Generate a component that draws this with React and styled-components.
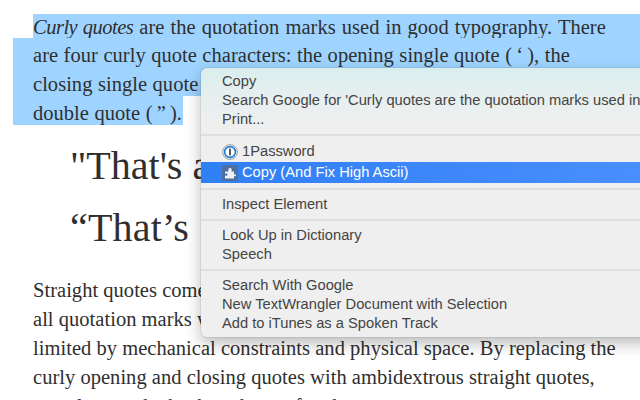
import React from "react";
import styled, { createGlobalStyle } from "styled-components";

const Global = createGlobalStyle`
  html, body { margin: 0; padding: 0; background: #fff; }
  body { width: 640px; height: 400px; overflow: hidden; }
`;

const Page = styled.div`
  position: relative;
  width: 640px;
  height: 400px;
  overflow: hidden;
  padding-top: 14px;
  box-sizing: border-box;
  font-family: "Liberation Serif", serif;
  color: #2f2f2f;
`;

const Selected = styled.div`
  margin-left: 13px;
  display: flex;
  flex-direction: column;
`;

const SelLine = styled.div`
  height: 29px;
  line-height: 35px;
  font-size: 20.5px;
  letter-spacing: 0.03px;
  word-spacing: 0.35px;
  white-space: nowrap;
  padding-left: 20px;
  background: #9ed4ff;
  width: ${(p) => p.$width || "627px"};
  box-sizing: border-box;
`;

const FirstLine = styled(SelLine)`
  height: 24px;
  line-height: 26px;
  margin-left: 20px;
  padding-left: 0;
  width: 607px;
  word-spacing: 0.9px;
`;

const Lead = styled.em`
  letter-spacing: -0.5px;
`;

const Quotes = styled.div`
  margin-top: 19px;
  padding-left: 70px;
  display: flex;
  flex-direction: column;
  gap: 18px;
`;

const Quote = styled.div`
  font-size: 40px;
  line-height: 44px;
  white-space: nowrap;
  letter-spacing: ${(p) => p.$track || "0"};
  word-spacing: ${(p) => p.$word || "0"};
`;

const Body = styled.div`
  margin-top: 26px;
  padding-left: 33px;
`;

const BodyLine = styled.div`
  height: 29px;
  line-height: 29px;
  font-size: 20.5px;
  letter-spacing: 0.03px;
  white-space: nowrap;
`;

const Menu = styled.div`
  position: absolute;
  left: 201px;
  top: 68px;
  width: 460px;
  height: 269px;
  box-sizing: border-box;
  padding-top: 4px;
  border-radius: 6px;
  background: linear-gradient(180deg, #d9eeee 0%, #e6efef 10%, #efefef 22%);
  box-shadow: 0 0 1px rgba(0, 0, 0, 0.5), 0 6px 16px rgba(0, 0, 0, 0.28);
  font-family: "Liberation Sans", sans-serif;
  font-size: 14.7px;
  color: #444;
`;

const Item = styled.div`
  display: flex;
  align-items: center;
  gap: 4px;
  height: 19px;
  line-height: 19px;
  padding-left: 21px;
  white-space: nowrap;
`;

const ActiveItem = styled(Item)`
  height: 21px;
  margin-top: 1px;
  background: linear-gradient(90deg, #2f7ff5, #4a8fff);
  color: #fff;
`;

const Sep = styled.div`
  height: 2px;
  background: #dedede;
  margin: 5px 0 ${(p) => p.$after || "5px"};
`;

const IconBox = styled.span`
  width: 16px;
  height: 16px;
  display: inline-flex;
  flex: none;
`;

const PasswordIcon = () => (
  <svg width="16" height="16" viewBox="0 0 16 16">
    <circle cx="8" cy="8" r="7.4" fill="#f4f4f4" stroke="#8a8a8a" strokeWidth="0.8" />
    <circle cx="8" cy="8" r="5.4" fill="#fff" stroke="#1a7fd8" strokeWidth="1.6" />
    <rect x="7.2" y="4.6" width="1.6" height="6.8" fill="#333" />
  </svg>
);

const PuzzleIcon = () => (
  <svg width="16" height="16" viewBox="0 0 16 16">
    <rect width="16" height="16" fill="#4f6f9f" />
    <path
      d="M3 6.500H6c.5 0 .6-.4.4-.8C6 4.800 6.500 3 8 3s2 1.800 1.600 2.700c-.2.4-.1.8.4.8h2V9c0 .5.4.6.8.4.500-.4 1.200-.2 1.200.8s-.7 1.200-1.200.8c-.4-.2-.8-.1-.8.4v2H3v-2.300c0-.5.4-.6.800-.4.900.4 1.700-.1 1.700-1.100S4.700 8.200 3.800 8.600c-.4.2-.8.100-.8-.4z"
      fill="#eef2f8"
    />
  </svg>
);

export default function App() {
  return (
    <Page>
      <Global />
      <Selected>
        <FirstLine>
          <Lead>Curly quotes</Lead> are the quotation marks used in good typography. There
        </FirstLine>
        <SelLine>are four curly quote characters: the opening single quote (&#8201;‘&#8201;), the</SelLine>
        <SelLine>closing single quote (&#8201;’&#8201;), the opening double quote (&#8201;“&#8201;), and the closing</SelLine>
        <SelLine $width="170px">double quote (&#8201;”&#8201;).</SelLine>
      </Selected>
      <Quotes>
        <Quote>"That's a lot</Quote>
        <Quote $track="0.2px" $word="4px">“That’s a lot</Quote>
      </Quotes>
      <Body>
        <BodyLine>Straight quotes come to us from the typewriter. In traditional printing,</BodyLine>
        <BodyLine>all quotation marks were curly. But typewriter character sets were</BodyLine>
        <BodyLine>limited by mechanical constraints and physical space. By replacing the</BodyLine>
        <BodyLine>curly opening and closing quotes with ambidextrous straight quotes,</BodyLine>
        <BodyLine>two slots on the keyboard were freed</BodyLine>
      </Body>
      <Menu>
        <Item>Copy</Item>
        <Item>Search Google for 'Curly quotes are the quotation marks used in</Item>
        <Item>Print...</Item>
        <Sep $after="6px" />
        <Item>
          <IconBox><PasswordIcon /></IconBox>1Password
        </Item>
        <ActiveItem>
          <IconBox><PuzzleIcon /></IconBox>Copy (And Fix High Ascii)
        </ActiveItem>
        <Sep />
        <Item>Inspect Element</Item>
        <Sep />
        <Item>Look Up in Dictionary</Item>
        <Item>Speech</Item>
        <Sep />
        <Item>Search With Google</Item>
        <Item>New TextWrangler Document with Selection</Item>
        <Item>Add to iTunes as a Spoken Track</Item>
      </Menu>
    </Page>
  );
}
